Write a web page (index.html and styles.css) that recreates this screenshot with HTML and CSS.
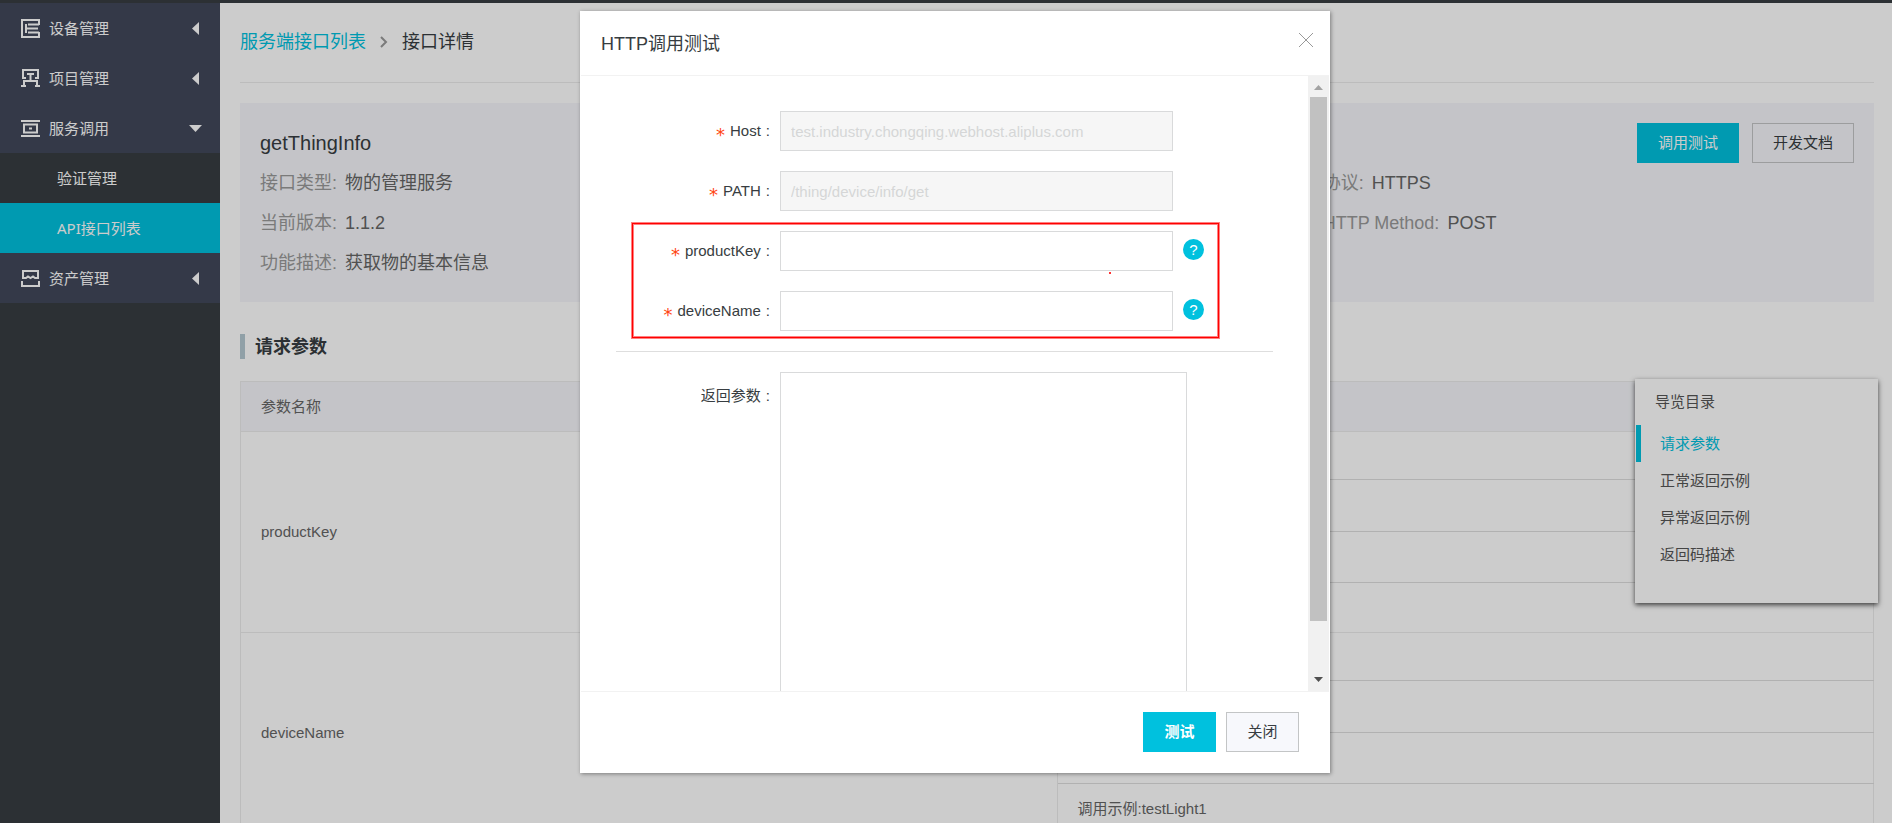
FILE: index.html
```html
<!DOCTYPE html>
<html lang="zh-CN">
<head>
<meta charset="utf-8">
<title>接口详情</title>
<link rel="stylesheet" href="styles.css">
</head>
<body>
<div class="app">
  <nav class="sidebar">
    <a class="menu-item" href="#">
      <svg class="menu-icon" viewBox="0 0 19 19"><path d="M18 6V1H1v17h17v-5M18 5.500H7M5 9.500h12M18 13.500H7M5 5v9"/></svg>
      <span class="menu-text">设备管理</span>
      <svg class="caret" viewBox="0 0 13 13"><path d="M10 0v13L3 6.500z"/></svg>
    </a>
    <a class="menu-item" href="#">
      <svg class="menu-icon" viewBox="0 0 19 19"><path d="M2 10V1h15v9M1 9h4M14 9h4M6 5h7M9.500 5v7M3 18v-6h13v6M0 17h5M14 17h5"/></svg>
      <span class="menu-text">项目管理</span>
      <svg class="caret" viewBox="0 0 13 13"><path d="M10 0v13L3 6.500z"/></svg>
    </a>
    <a class="menu-item" href="#">
      <svg class="menu-icon" viewBox="0 0 19 19"><path d="M1 3V2h17v1M1 16v1h17v-1M3 5.500h13v8H3zM8 9.500h3"/></svg>
      <span class="menu-text">服务调用</span>
      <svg class="caret" viewBox="0 0 13 13"><path d="M0 3h13L6.500 10z"/></svg>
    </a>
    <a class="menu-item menu-sub" href="#">验证管理</a>
    <a class="menu-item menu-sub menu-active" href="#">API接口列表</a>
    <a class="menu-item" href="#">
      <svg class="menu-icon" viewBox="0 0 19 19"><path d="M2 10V2h15v8M1 9h4l2-1.500L9.500 9 12 7.500 14 9h4M1 12v5h17v-5"/></svg>
      <span class="menu-text">资产管理</span>
      <svg class="caret" viewBox="0 0 13 13"><path d="M10 0v13L3 6.500z"/></svg>
    </a>
  </nav>

  <main class="main">
    <div class="crumbs">
      <a class="crumb-link" href="#">服务端接口列表</a>
      <svg class="crumb-arrow" viewBox="0 0 8 12"><path d="M1 1l5 5-5 5"/></svg>
      <span>接口详情</span>
    </div>

    <section class="summary">
      <div class="summary-actions">
        <button class="btn btn-primary" type="button">调用测试</button>
        <button class="btn btn-ghost" type="button">开发文档</button>
      </div>
      <h1 class="api-name">getThingInfo</h1>
      <div class="facts">
        <div class="fact"><span class="fact-key">接口类型:</span><span>物的管理服务</span></div>
        <div class="fact"><span class="fact-key">协议:</span><span>HTTPS</span></div>
        <div class="fact"><span class="fact-key">当前版本:</span><span>1.1.2</span></div>
        <div class="fact"><span class="fact-key">HTTP Method:</span><span>POST</span></div>
        <div class="fact"><span class="fact-key">功能描述:</span><span>获取物的基本信息</span></div>
      </div>
    </section>

    <h2 class="section-title">请求参数</h2>
    <table class="params">
      <thead><tr><th>参数名称</th><th></th></tr></thead>
      <tbody>
        <tr class="row-first"><td rowspan="4">productKey</td><td class="detail"></td></tr>
        <tr class="row-tall"><td class="detail"></td></tr>
        <tr class="row-mid"><td class="detail"></td></tr>
        <tr><td class="detail detail-last"></td></tr>
        <tr class="row-first"><td rowspan="4">deviceName</td><td class="detail"></td></tr>
        <tr class="row-tall"><td class="detail"></td></tr>
        <tr class="row-mid"><td class="detail"></td></tr>
        <tr><td class="detail detail-last">调用示例:testLight1</td></tr>
      </tbody>
    </table>
  </main>
</div>

<aside class="toc">
  <div class="toc-title">导览目录</div>
  <a class="toc-link toc-current" href="#">请求参数</a>
  <a class="toc-link" href="#">正常返回示例</a>
  <a class="toc-link" href="#">异常返回示例</a>
  <a class="toc-link" href="#">返回码描述</a>
</aside>

<div class="overlay">
  <div class="dialog" role="dialog" aria-labelledby="dialog-title">
    <header class="dialog-head">
      <h2 class="dialog-title" id="dialog-title">HTTP调用测试</h2>
      <button class="close" type="button" aria-label="关闭窗口"><svg viewBox="0 0 14 14"><path d="M0 0l14 14M14 0L0 14"/></svg></button>
    </header>
    <div class="dialog-body">
      <form class="form">
        <div class="field">
          <label class="label" for="host"><span class="star">*</span>Host<span class="colon">:</span></label>
          <input class="input" id="host" disabled value="test.industry.chongqing.webhost.aliplus.com">
        </div>
        <div class="field">
          <label class="label" for="path"><span class="star">*</span>PATH<span class="colon">:</span></label>
          <input class="input" id="path" disabled value="/thing/device/info/get">
        </div>
        <div class="marked">
          <div class="field">
            <label class="label" for="product"><span class="star">*</span>productKey<span class="colon">:</span></label>
            <input class="input" id="product">
            <span class="help">?</span>
          </div>
          <div class="field">
            <label class="label" for="device"><span class="star">*</span>deviceName<span class="colon">:</span></label>
            <input class="input" id="device">
            <span class="help">?</span>
          </div>
          <div class="mark"></div>
          <div class="mark-dot"></div>
        </div>
        <div class="field field-result">
          <label class="label label-result" for="result">返回参数<span class="colon">:</span></label>
          <textarea class="input result" id="result"></textarea>
        </div>
      </form>
      <div class="scroll">
        <svg class="scroll-up" viewBox="0 0 21 21"><path d="M6 14h9l-4.500-5z"/></svg>
        <div class="scroll-thumb"></div>
        <svg class="scroll-down" viewBox="0 0 21 21"><path d="M6 7h9l-4.500 5z"/></svg>
      </div>
    </div>
    <footer class="dialog-foot">
      <button class="btn btn-primary btn-small btn-strong" type="button">测试</button>
      <button class="btn btn-plain btn-small" type="button">关闭</button>
    </footer>
  </div>
</div>
</body>
</html>
```

FILE: styles.css
```css
* { box-sizing: border-box; }
html, body { height: 100%; }
body {
  margin: 0;
  overflow: hidden;
  position: relative;
  font: 15px/20px "Liberation Sans", "Noto Sans CJK SC", sans-serif;
  color: #373d41;
  background: #fff;
}
a { text-decoration: none; color: inherit; }
h1, h2 { margin: 0; font-weight: 400; }
button, input, textarea { font: inherit; color: inherit; }

.app {
  display: flex;
  height: 100%;
  border-top: 3px solid #373d41;
  overflow: hidden;
}

/* sidebar */
.sidebar {
  flex: 0 0 220px;
  background: #373d41;
  color: #fff;
  font-family: "Noto Sans", "Noto Sans CJK SC", sans-serif;
}
.menu-item {
  display: flex;
  align-items: center;
  height: 50px;
  padding: 0 18px 0 21px;
  background: #42485b;
}
.menu-icon { width: 19px; height: 19px; fill: none; stroke: #fff; stroke-width: 2; }
.menu-text { flex: 1; margin-left: 9px; }
.caret { width: 13px; height: 13px; fill: #fff; }
.menu-sub { padding-left: 57px; background: #373d41; }
.menu-active { background: #00c1de; }

/* page */
.main { flex: 1; padding: 0 18px 0 20px; }
.crumbs {
  display: flex;
  align-items: center;
  gap: 14px;
  height: 80px;
  padding-bottom: 2px;
  border-bottom: 1px solid #ebecec;
  font-size: 18px;
}
.crumb-link { color: #00c1de; }
.crumb-arrow { width: 8px; height: 12px; fill: none; stroke: #999; stroke-width: 2; }
.summary {
  margin-top: 20px;
  padding: 20px;
  height: 199px;
  background: #f5f6fa;
}
.summary-actions { float: right; display: flex; gap: 13px; }
.api-name { font-size: 20px; line-height: 40px; }
.facts {
  display: grid;
  grid-template-columns: 2fr 1fr;
  font-size: 18px;
  line-height: 40px;
  color: #666;
}
.fact { display: flex; gap: 8px; }
.fact-key { color: #999; }

.btn {
  height: 40px;
  min-width: 102px;
  padding: 0 10px;
  border: 1px solid #c3c5c6;
  background: #f5f6fa;
}
.btn-primary { border-color: #00c1de; background: #00c1de; color: #fff; }
.btn-small { min-width: 73px; }
.btn-strong { font-weight: 700; }
.btn-plain { background: #f7f8fc; }

.section-title {
  margin: 32px 0 22px;
  padding: 2px 0 0 10px;
  border-left: 5px solid #b5c8d1;
  font-size: 18px;
  line-height: 23px;
  font-weight: 700;
}
.params { width: 100%; border-collapse: collapse; table-layout: fixed; color: #666; }
.params th, .params td {
  height: 50px;
  padding: 0 20px;
  border: 1px solid #ebecec;
  text-align: left;
  font-weight: 400;
}
.params th { background: #f5f6fa; }
.params th + th { border-left: 0; }
.params .detail { border-bottom-color: #dedede; }
.params .detail-last { border-bottom-color: #ebecec; }
.params .row-first .detail { height: 48px; }
.params .row-tall .detail { height: 52px; }
.params .row-mid .detail { height: 51px; }

/* contents panel */
.toc {
  position: absolute;
  top: 379px;
  right: 14px;
  width: 243px;
  padding: 13px 1px 30px;
  background: #fff;
  box-shadow: 0 2px 5px rgba(0, 0, 0, .7);
  color: #555;
}
.toc-title { padding: 0 19px; margin-bottom: 13px; }
.toc-link { display: block; padding: 0 19px; border-left: 5px solid transparent; line-height: 37px; }
.toc-current { border-left-color: #00c1de; color: #00c1de; }

/* dialog */
.overlay {
  position: absolute;
  inset: 0;
  display: flex;
  justify-content: center;
  align-items: flex-start;
  padding: 11px 0 0 18px;
  background: rgba(0, 0, 0, .2);
}
.dialog {
  width: 750px;
  border: 1px solid #fff;
  background: #fff;
  box-shadow: 1px 1px 4px rgba(0, 0, 0, .4);
}
.dialog-head {
  display: flex;
  justify-content: space-between;
  align-items: flex-start;
  padding: 21px 16px 20px 20px;
  border-bottom: 1px solid #f2f2f2;
}
.dialog-title { font-size: 18px; line-height: 22px; }
.close { padding: 0; border: 0; background: none; line-height: 0; }
.close svg { width: 14px; height: 14px; fill: none; stroke: #999; stroke-width: 1; }
.dialog-body { display: flex; height: 615px; overflow: hidden; }
.form { flex: 1; padding: 35px; }
.field { display: grid; grid-template-columns: 1fr 393px 100px; margin-bottom: 20px; }
.label { line-height: 40px; text-align: right; padding-right: 10px; }
.colon { margin-left: 5px; }
.star {
  margin-right: 5px;
  color: #ff4612;
  font-family: "DejaVu Sans", sans-serif;
  font-size: 18px;
  line-height: 0;
  vertical-align: -5px;
}
.input {
  width: 100%;
  height: 40px;
  padding: 0 10px;
  border: 1px solid #d9dadb;
  border-radius: 0;
  background: #fff;
}
.input:disabled { background: #f6f6f6; color: #d5d6d7; }
.help {
  width: 21px;
  height: 21px;
  margin: 8px 0 0 10px;
  border-radius: 50%;
  background: #00c1de;
  color: #fff;
  line-height: 21px;
  text-align: center;
}
.marked { position: relative; border-bottom: 1px solid #dedede; }
.mark {
  position: absolute;
  inset: -8px 54px 13px 16px;
  border: 1px solid #f00;
  box-shadow: 0 0 0 1px #ff8080, inset 0 0 0 1px #ff8080;
  pointer-events: none;
}
.mark-dot {
  position: absolute;
  top: 41px;
  left: 75%;
  width: 2px;
  height: 2px;
  background: #f33;
}
.field-result { grid-template-columns: 1fr 407px 86px; margin-top: 20px; }
.label-result { line-height: 48px; }
.result { height: 400px; resize: none; }
.scroll { display: flex; flex-direction: column; flex: 0 0 21px; background: #f1f1f1; }
.scroll-up, .scroll-down { width: 21px; height: 21px; fill: #a3a3a3; }
.scroll-down { margin-top: auto; fill: #505050; }
.scroll-thumb { height: 524px; margin: 0 2px; background: #c1c1c1; }
.dialog-foot {
  display: flex;
  justify-content: flex-end;
  gap: 10px;
  padding: 20px 30px;
  border-top: 1px solid #f2f2f2;
}
```
